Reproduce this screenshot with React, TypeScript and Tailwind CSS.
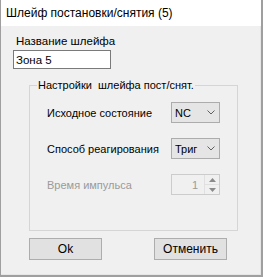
function Combo({ value }: { value: string }) {
  return (
    <div className="flex h-[21px] w-[49px] items-center justify-between border border-[#acacac] bg-[#e5e5e5] pl-[3px] pr-[4px] text-black">
      <span>{value}</span>
      <svg width="8" height="5" viewBox="0 0 8 5" className="text-[#606060]">
        <path d="M0.5 0.5 L4 4 L7.5 0.5" fill="none" stroke="currentColor" strokeWidth="1" />
      </svg>
    </div>
  );
}

function Spinner() {
  return (
    <div className="flex h-[21px] w-[49px] items-center border border-[#cccccc] bg-[#f0f0f0] text-[#9a9a9a]">
      <span className="flex-1 pr-[6px] text-right">1</span>
      <div className="flex h-full w-[15px] flex-col border-l border-[#e0e0e0]">
        <div className="flex flex-1 items-center justify-center border-b border-[#e0e0e0]">
          <svg width="7" height="4" viewBox="0 0 7 4">
            <path d="M3.5 0 L7 4 L0 4 Z" fill="#8a8a8a" />
          </svg>
        </div>
        <div className="flex flex-1 items-center justify-center">
          <svg width="7" height="4" viewBox="0 0 7 4">
            <path d="M0 0 L7 0 L3.5 4 Z" fill="#8a8a8a" />
          </svg>
        </div>
      </div>
    </div>
  );
}

export default function App() {
  return (
    <div className="flex h-[277px] w-[263px] flex-col border-b-2 border-l border-r-2 border-[#9f9f9f] bg-[#f0f0f0] font-['Liberation_Sans',sans-serif] text-[11px] leading-[14px] text-black">
      <div className="flex h-[26px] items-center bg-white pl-[5px] text-[12px]">
        Шлейф постановки/снятия (5)
      </div>
      <div className="flex flex-1 flex-col border-b border-r border-[#e6e6e6] pl-[12px]">
        <div className="mt-[8px] pl-[3px] text-[11.5px]">Название шлейфа</div>
        <div className="mt-[2px] flex h-[19px] w-[98px] items-center border border-[#7a7a7a] bg-white pl-[2px] text-[11.5px]">
          Зона 5
        </div>
        <fieldset className="ml-[16px] mt-[9px] h-[153px] w-[209px] border border-[#d5d5d5]">
          <legend className="ml-[7px] whitespace-nowrap px-[1px]">Настройки &nbsp;шлейфа пост/снят.</legend>
          <div className="mt-[10px] flex flex-col gap-[16px] px-[17px]">
            <div className="flex items-center justify-between">
              <span>Исходное состояние</span>
              <Combo value="NC" />
            </div>
            <div className="-mt-[1px] flex items-center justify-between">
              <span>Способ реагирования</span>
              <Combo value="Триг" />
            </div>
            <div className="-mt-[1px] flex items-center justify-between">
              <span className="text-[#9a9a9a]">Время импульса</span>
              <Spinner />
            </div>
          </div>
        </fieldset>
        <div className="mt-[7px] flex w-[214px] justify-between pl-[16px] text-[12px]">
          <button className="flex h-[22px] w-[73px] items-center justify-center border border-[#adadad] bg-[#e1e1e1]">
            Ok
          </button>
          <button className="flex h-[22px] w-[73px] items-center justify-center border border-[#adadad] bg-[#e1e1e1]">
            Отменить
          </button>
        </div>
      </div>
    </div>
  );
}
